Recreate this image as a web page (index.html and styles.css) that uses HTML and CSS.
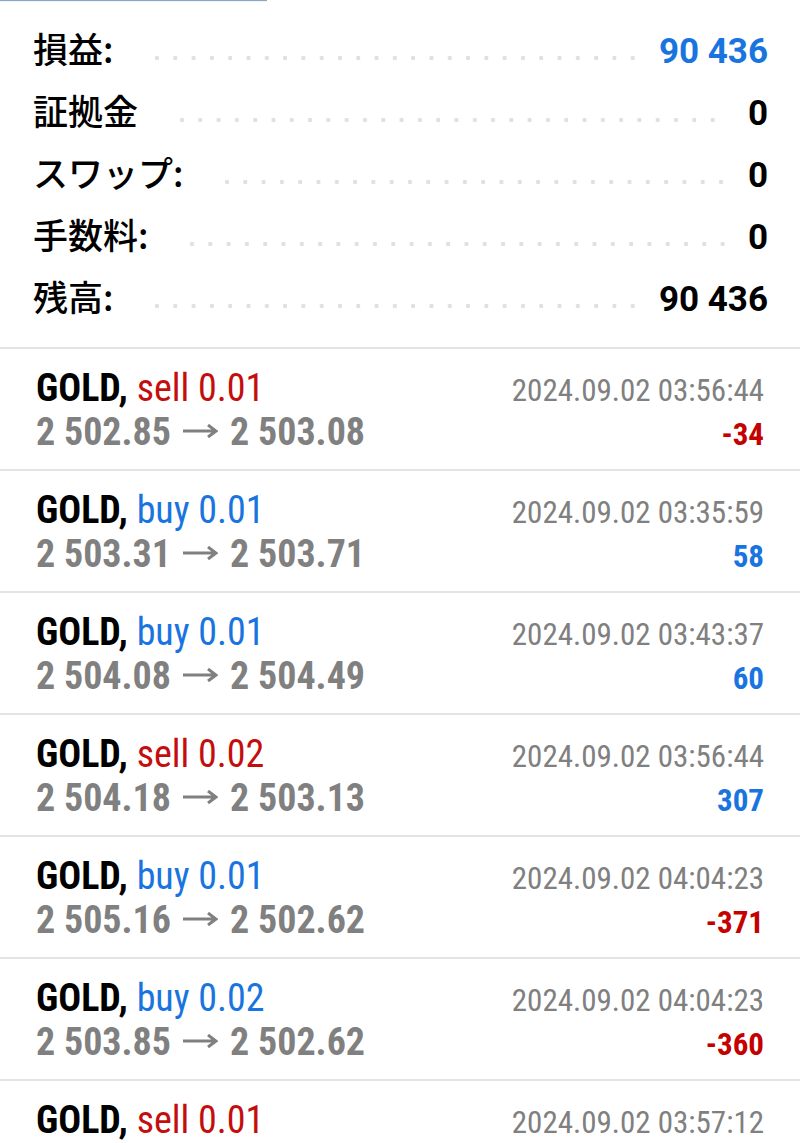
FILE: index.html
```html
<!DOCTYPE html>
<html lang="ja">
<head>
  <meta charset="UTF-8">
  <meta name="viewport" content="width=device-width, initial-scale=1.0">
  <title>履歴</title>
  <link rel="stylesheet" href="styles.css">
</head>
<body>

  <div class="tab-line"></div>

  <!-- 合計 -->
  <div class="summary">
    <div class="sum-row">
      <span class="label">損益:</span>
      <span class="leader"></span>
      <span class="value blue">90 436</span>
    </div>
    <div class="sum-row">
      <span class="label">証拠金</span>
      <span class="leader"></span>
      <span class="value">0</span>
    </div>
    <div class="sum-row">
      <span class="label">スワップ:</span>
      <span class="leader"></span>
      <span class="value">0</span>
    </div>
    <div class="sum-row">
      <span class="label">手数料:</span>
      <span class="leader"></span>
      <span class="value">0</span>
    </div>
    <div class="sum-row">
      <span class="label">残高:</span>
      <span class="leader"></span>
      <span class="value">90 436</span>
    </div>
  </div>

  <!-- 取引一覧 -->
  <div class="deals">
    <div class="deal">
      <div class="line">
        <span class="title"><b>GOLD,</b> <span class="sell">sell 0.01</span></span>
        <span class="time">2024.09.02 03:56:44</span>
      </div>
      <div class="line">
        <span class="price">2 502.85<svg class="arrow" viewBox="0 0 35 14"><path d="M0 7H33M25 1l8 6-8 6"/></svg>2 503.08</span>
        <span class="profit loss">-34</span>
      </div>
    </div>

    <div class="deal">
      <div class="line">
        <span class="title"><b>GOLD,</b> <span class="buy">buy 0.01</span></span>
        <span class="time">2024.09.02 03:35:59</span>
      </div>
      <div class="line">
        <span class="price">2 503.31<svg class="arrow" viewBox="0 0 35 14"><path d="M0 7H33M25 1l8 6-8 6"/></svg>2 503.71</span>
        <span class="profit gain">58</span>
      </div>
    </div>

    <div class="deal">
      <div class="line">
        <span class="title"><b>GOLD,</b> <span class="buy">buy 0.01</span></span>
        <span class="time">2024.09.02 03:43:37</span>
      </div>
      <div class="line">
        <span class="price">2 504.08<svg class="arrow" viewBox="0 0 35 14"><path d="M0 7H33M25 1l8 6-8 6"/></svg>2 504.49</span>
        <span class="profit gain">60</span>
      </div>
    </div>

    <div class="deal">
      <div class="line">
        <span class="title"><b>GOLD,</b> <span class="sell">sell 0.02</span></span>
        <span class="time">2024.09.02 03:56:44</span>
      </div>
      <div class="line">
        <span class="price">2 504.18<svg class="arrow" viewBox="0 0 35 14"><path d="M0 7H33M25 1l8 6-8 6"/></svg>2 503.13</span>
        <span class="profit gain">307</span>
      </div>
    </div>

    <div class="deal">
      <div class="line">
        <span class="title"><b>GOLD,</b> <span class="buy">buy 0.01</span></span>
        <span class="time">2024.09.02 04:04:23</span>
      </div>
      <div class="line">
        <span class="price">2 505.16<svg class="arrow" viewBox="0 0 35 14"><path d="M0 7H33M25 1l8 6-8 6"/></svg>2 502.62</span>
        <span class="profit loss">-371</span>
      </div>
    </div>

    <div class="deal">
      <div class="line">
        <span class="title"><b>GOLD,</b> <span class="buy">buy 0.02</span></span>
        <span class="time">2024.09.02 04:04:23</span>
      </div>
      <div class="line">
        <span class="price">2 503.85<svg class="arrow" viewBox="0 0 35 14"><path d="M0 7H33M25 1l8 6-8 6"/></svg>2 502.62</span>
        <span class="profit loss">-360</span>
      </div>
    </div>

    <div class="deal">
      <div class="line">
        <span class="title"><b>GOLD,</b> <span class="sell">sell 0.01</span></span>
        <span class="time">2024.09.02 03:57:12</span>
      </div>
    </div>
  </div>

</body>
</html>
```

FILE: styles.css
```css
html, body {
  margin: 0;
  padding: 0;
  background: #fff;
  overflow: hidden;
  font-family: Roboto, "Noto Sans CJK JP", sans-serif;
}

.tab-line {
  width: 267px;
  height: 1px;
  background: #8ba6c1;
  border-bottom: 1px solid #eef3f8;
}

/* 合計 */
.summary {
  padding: 15px 32px 20px 33px;
}

.sum-row {
  display: flex;
  align-items: baseline;
  height: 62px;
  line-height: 62px;
}

.label {
  font-family: "Noto Sans CJK JP", sans-serif;
  font-size: 35px;
  font-weight: 500;
  color: #000;
}

/* 点線リーダー: 下端がベースライン */
.leader {
  flex: 1;
  height: 7px;
  margin: 0 20px 0 42px;
  background: radial-gradient(circle at 2px 2px, #e0e0e0 2px, transparent 2.4px) 0 0 / 18.3px 4px repeat-x;
}

.value {
  font-size: 35px;
  font-weight: 700;
  color: #000;
}

.blue { color: #1a74e0; }

/* 取引一覧 */
.deal {
  border-top: 2px solid #e4e4e4;
  padding: 17px 36px 15px 36px;
  font-family: "Roboto Condensed", Roboto, sans-serif;
  font-stretch: 85%;
}

.line {
  display: flex;
  justify-content: space-between;
  align-items: baseline;
  height: 44px;
  line-height: 44px;
}

.title {
  font-size: 38px;
  color: #000;
}

.title b { font-weight: 700; }

.sell { color: #c40e0e; }
.buy { color: #1a74e0; }

.time {
  font-size: 31px;
  color: #808080;
}

.price {
  font-size: 38px;
  font-weight: 700;
  color: #808080;
}

.arrow {
  width: 35px;
  height: 14px;
  margin: 0 12px;
  vertical-align: 7px;
  fill: none;
  stroke: #808080;
  stroke-width: 3;
}

.profit {
  font-size: 31px;
  font-weight: 700;
}

.loss { color: #c40000; }
.gain { color: #1a74e0; }
```
